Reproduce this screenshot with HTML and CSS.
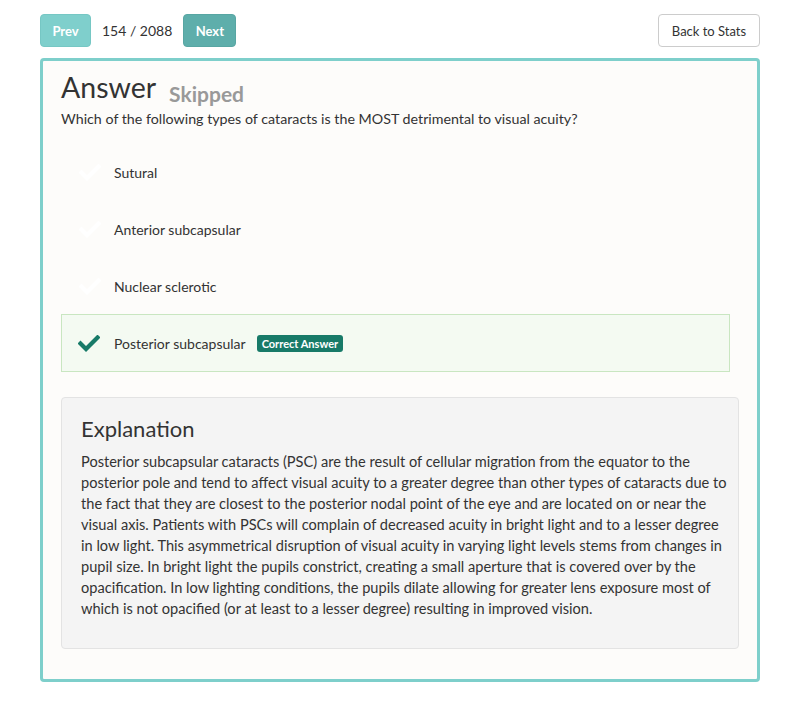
FILE: index.html
```html
<!DOCTYPE html>
<html>
<head>
<meta charset="utf-8">
<link rel="stylesheet" href="styles.css">
</head>
<body>
<div class="page">
  <div class="topbar">
    <div class="nav">
      <button class="btn btn-prev">Prev</button>
      <span class="counter">154 / 2088</span>
      <button class="btn btn-next">Next</button>
    </div>
    <button class="btn btn-back">Back to Stats</button>
  </div>

  <div class="card">
    <div class="title-row">
      <h1 class="title">Answer</h1>
      <span class="status">Skipped</span>
    </div>
    <p class="question">Which of the following types of cataracts is the MOST detrimental to visual acuity?</p>

    <ul class="options">
      <li class="option">
        <svg class="check" viewBox="0 0 22 17"><path d="M2.5 8.5 L8 14 L19.5 2.5"/></svg>
        <span class="option-text">Sutural</span>
      </li>
      <li class="option">
        <svg class="check" viewBox="0 0 22 17"><path d="M2.5 8.5 L8 14 L19.5 2.5"/></svg>
        <span class="option-text">Anterior subcapsular</span>
      </li>
      <li class="option">
        <svg class="check" viewBox="0 0 22 17"><path d="M2.5 8.5 L8 14 L19.5 2.5"/></svg>
        <span class="option-text">Nuclear sclerotic</span>
      </li>
      <li class="option option-correct">
        <svg class="check" viewBox="0 0 22 17"><path d="M2.5 8.5 L8 14 L19.5 2.5"/></svg>
        <span class="option-text">Posterior subcapsular</span>
        <span class="badge">Correct Answer</span>
      </li>
    </ul>

    <div class="explanation">
      <h2 class="exp-title">Explanation</h2>
      <p class="exp-text">Posterior subcapsular cataracts (PSC) are the result of cellular migration from the equator to the<br>posterior pole and tend to affect visual acuity to a greater degree than other types of cataracts due to<br>the fact that they are closest to the posterior nodal point of the eye and are located on or near the<br>visual axis. Patients with PSCs will complain of decreased acuity in bright light and to a lesser degree<br>in low light. This asymmetrical disruption of visual acuity in varying light levels stems from changes in<br>pupil size. In bright light the pupils constrict, creating a small aperture that is covered over by the<br>opacification. In low lighting conditions, the pupils dilate allowing for greater lens exposure most of<br>which is not opacified (or at least to a lesser degree) resulting in improved vision.</p>
    </div>
  </div>
</div>
</body>
</html>
```

FILE: styles.css
```css
* { box-sizing: border-box; }
html, body { margin: 0; padding: 0; background: #ffffff; }
body {
  font-family: "Lato", "Open Sans", sans-serif;
  font-size: 14px;
  color: #333333;
}
.page {
  padding: 14px 40px 0 40px;
}
.topbar {
  display: flex;
  justify-content: space-between;
  align-items: center;
  height: 33px;
}
.nav {
  display: flex;
  align-items: center;
  gap: 11px;
}
.btn {
  font-family: inherit;
  font-size: 13px;
  height: 33px;
  border-radius: 4px;
  border: 1px solid transparent;
  padding: 0 12px;
  cursor: pointer;
}
.btn-prev {
  background: #7fcfcc;
  border-color: #76c7c4;
  color: #ffffff;
  font-weight: 700;
  width: 51px;
  padding: 0;
}
.btn-next {
  background: #5eaeab;
  border-color: #58a6a3;
  color: #ffffff;
  font-weight: 700;
  width: 53px;
  padding: 0;
}
.counter {
  font-size: 14px;
  color: #333;
}
.btn-back {
  background: #ffffff;
  border-color: #cccccc;
  color: #333333;
  width: 102px;
  padding: 0;
}
.card {
  margin-top: 11px;
  border: 3px solid #7ecfcb;
  border-radius: 4px;
  background: #fdfcfa;
  padding: 8px 18px 31px 18px;
  height: 624px;
}
.title-row {
  display: flex;
  align-items: baseline;
  gap: 13px;
}
.title {
  margin: 0;
  font-size: 28.5px;
  font-weight: 400;
  line-height: 36px;
  color: #333;
}
.status {
  font-size: 21px;
  font-weight: 700;
  color: #999999;
  position: relative;
  top: 4px;
}
.question {
  margin: 4px 0 0 0;
  line-height: 20px;
  font-size: 14.25px;
}
.options {
  list-style: none;
  margin: 15px 9px 0 0;
  padding: 0;
}
.option {
  display: flex;
  align-items: center;
  height: 57px;
  padding-left: 17px;
  border: 1px solid transparent;
}
.check {
  width: 22px;
  height: 17px;
  fill: none;
  stroke: #ffffff;
  stroke-width: 4.2;
  stroke-linecap: square;
  stroke-linejoin: miter;
  flex: none;
}
.option-text {
  margin-left: 13px;
}
.option-correct {
  background: #f4faf2;
  border-color: #c9e6c1;
  height: 58px;
  margin-top: -1px;
  padding-left: 16px;
}
.option-correct .check {
  stroke: #177a68;
}
.option-correct .option-text {
  margin-left: 14px;
}
.badge {
  margin-left: 11px;
  background: #177a68;
  color: #ffffff;
  font-size: 11px;
  font-weight: 700;
  padding: 2px 5px 2px 5px;
  border-radius: 3px;
  line-height: 13px;
}
.explanation {
  margin-top: 25px;
  background: #f4f4f4;
  border: 1px solid #e3e3e3;
  border-radius: 4px;
  padding: 17px 4px 29px 19px;
}
.exp-title {
  margin: 0;
  font-size: 22px;
  font-weight: 400;
  line-height: 28px;
  color: #333;
}
.exp-text {
  margin: 8px 0 0 0;
  line-height: 21px;
  font-size: 14.6px;
  white-space: nowrap;
}
```
